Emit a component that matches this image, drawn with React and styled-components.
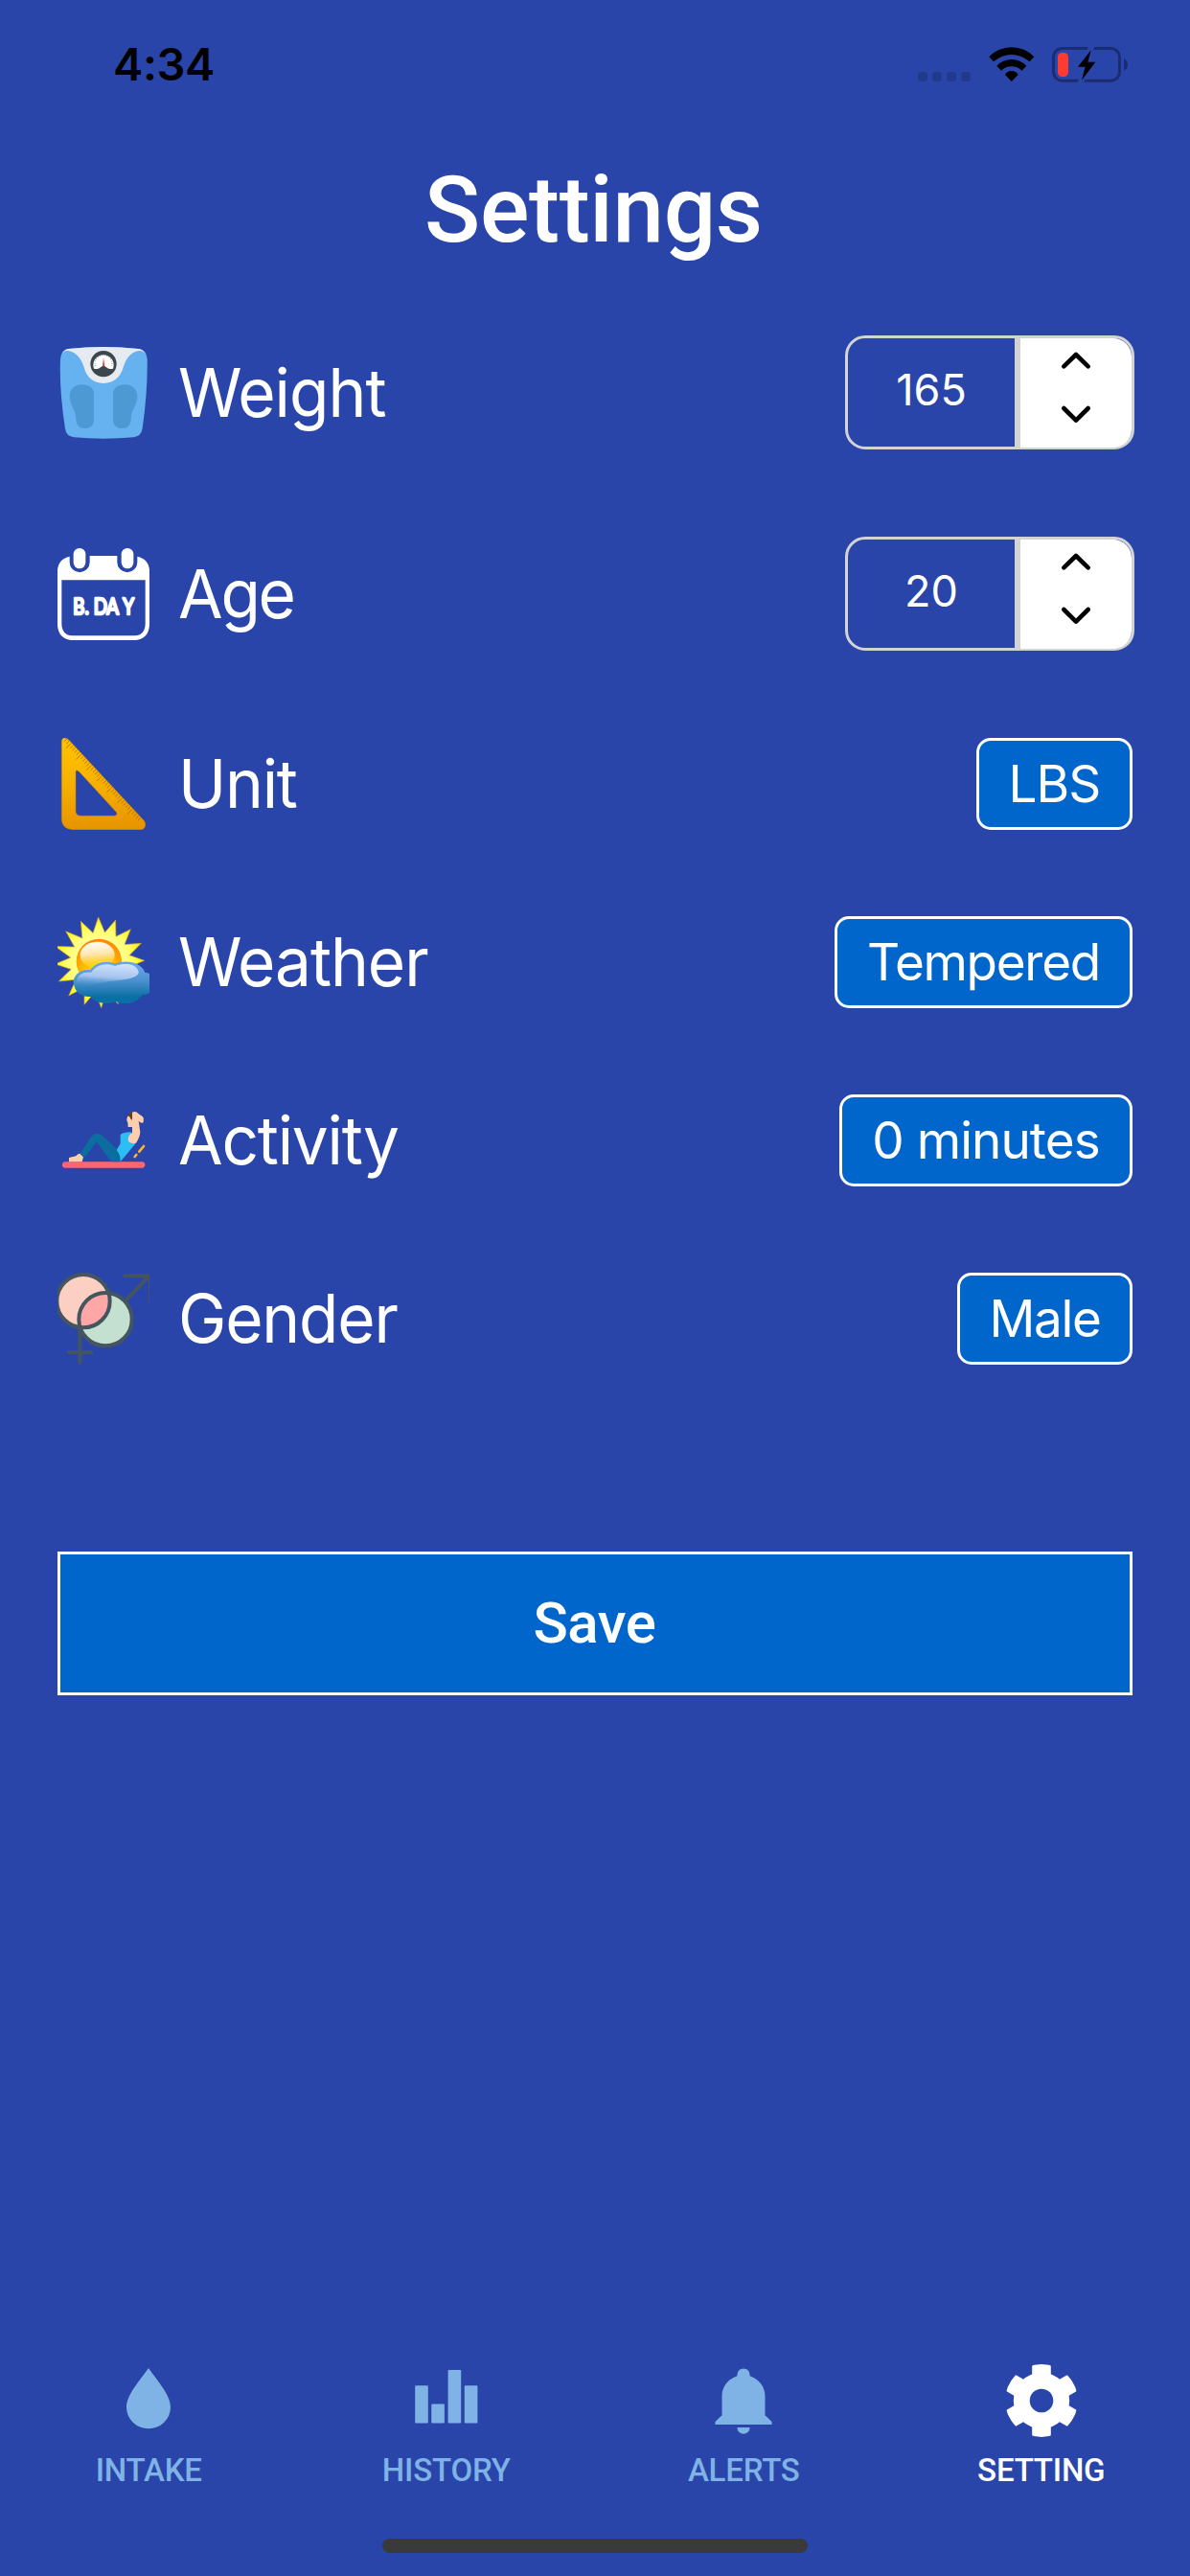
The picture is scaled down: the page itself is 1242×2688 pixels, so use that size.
import React from "react";
import styled, { createGlobalStyle } from "styled-components";

const BG = "#2945a9";
const TEXT_FONT = `Inter, "Liberation Sans", sans-serif`;
const HEAD_FONT = `Roboto, "Liberation Sans", sans-serif`;

const GlobalStyle = createGlobalStyle`
  *, *::before, *::after { box-sizing: border-box; }
  html, body { margin: 0; background: ${BG}; }
  button { font: inherit; color: inherit; margin: 0; cursor: pointer; }
  svg { display: block; flex: none; }
`;

const Screen = styled.div`
  display: flex;
  flex-direction: column;
  width: 1242px;
  height: 2688px;
  overflow: hidden;
  background: ${BG};
  color: #fff;
  font-family: ${TEXT_FONT};
`;

const StatusBar = styled.header`
  display: flex;
  align-items: center;
  justify-content: space-between;
  height: 87px;
  padding: 47px 65px 0 118px;
  color: #000;
`;

const Clock = styled.time`
  font-size: 47px;
  font-weight: 600;
  line-height: 40px;
  letter-spacing: -0.4px;
`;

const StatusIcons = styled.div`
  display: flex;
  gap: 18.5px;
`;

const Title = styled.h1`
  margin: 76px 0 75px;
  padding-right: 3px;
  font-family: ${HEAD_FONT};
  font-size: 96px;
  font-weight: 500;
  line-height: 112px;
  letter-spacing: -0.3px;
  text-align: center;
`;

const Settings = styled.main`
  display: flex;
  flex-direction: column;
  gap: 90px;
  padding: 0 60px;
`;

const Row = styled.section`
  display: flex;
  align-items: center;
  height: ${(p) => (p.$tall ? 120 : 96)}px;
`;

const Label = styled.h2`
  flex: 1;
  margin: 0 0 0 30px;
  font-size: 70px;
  font-weight: 400;
  line-height: 84px;
  letter-spacing: ${(p) => p.$spacing}px;
  transform: scaleX(0.965);
  transform-origin: left;
`;

const Stepper = styled.div`
  display: flex;
  width: 302px;
  height: 119px;
  margin: 0 -2px 1px 0;
  border: 3px solid #d3d3d3;
  border-radius: 21px;
`;

const StepperValue = styled.div`
  flex: 1;
  font-size: 45px;
  line-height: 108px;
  text-align: center;
`;

const StepperButtons = styled.div`
  display: flex;
  flex-direction: column;
  align-items: center;
  gap: 22px;
  width: 122px;
  height: 114px;
  padding: 12px 1px 0 0;
  border-left: 6px solid #d3d3d3;
  border-radius: 0 19px 19px 0;
  background: #fff;
`;

const StepButton = styled.button`
  display: block;
  padding: 0;
  border: 0;
  background: none;
`;

const Chip = styled.button`
  width: ${(p) => p.$width}px;
  height: 96px;
  padding: 0;
  border: 3px solid #fff;
  border-radius: 15px;
  background: #0066cc;
  font-size: 53px;
  line-height: 90px;
  letter-spacing: ${(p) => p.$spacing}px;
  white-space: nowrap;
`;

const SaveButton = styled.button`
  height: 150px;
  margin: 195px 60px 0;
  padding: 0 1px 2px 0;
  border: 3px solid #fff;
  background: #0066cc;
  font-family: ${HEAD_FONT};
  font-size: 60px;
  font-weight: 500;
  letter-spacing: -0.4px;
`;

const TabBar = styled.nav`
  display: grid;
  grid-template-columns: repeat(4, 1fr);
  margin-top: auto;
`;

const Tab = styled.a`
  display: flex;
  flex-direction: column;
  align-items: center;
  gap: 13px;
  color: ${(p) => (p.$active ? "#fff" : "#7fb2e5")};
  font-family: ${HEAD_FONT};
  font-size: 33px;
  font-weight: 500;
  line-height: 40px;
  letter-spacing: -0.2px;
`;

const HomeIndicator = styled.div`
  flex: none;
  align-self: center;
  width: 444px;
  height: 15px;
  margin: 51px 0 24px;
  border-radius: 8px;
  background: #3a3a3a;
`;

/* ---------- status icons ---------- */

const SignalDots = () => (
  <svg width="55" height="40" viewBox="0 0 55 40" fill="#223a8d">
    {[0, 15, 30, 45].map((x) => (
      <rect key={x} x={x} y="28" width="10" height="10" rx="3.2" />
    ))}
  </svg>
);

const Wifi = () => (
  <svg width="48" height="40" viewBox="0 0 48 40">
    <path d="M0.3 12.3A32.5 32.5 0 0 1 47.3 12.3L42.5 17.3A27.7 27.7 0 0 0 5 17.3Z" />
    <path d="M8.3 21.7A21.3 21.3 0 0 1 39.3 21.7L34.6 26.7A15.5 15.5 0 0 0 13 26.7Z" />
    <path d="M17 31A7.8 7.8 0 0 1 30.6 31L23.8 38Z" />
  </svg>
);

const Battery = () => (
  <svg width="79" height="40" viewBox="0 0 79 40">
    <rect x="1.5" y="3.5" width="69" height="33.7" rx="9" fill="none" stroke="#1b2d70" strokeWidth="3" />
    <path d="M75 14Q79 16.5 79 20.5T75 27Z" fill="#1b2d70" />
    <path d="M42 0L39 7M32 34L29.5 40" stroke={BG} strokeWidth="6" />
    <rect x="6" y="8" width="11" height="25" rx="4.5" fill="#ff3b30" />
    <path d="M40.7 5.2L27 22.8H34.6L31 36.8L45.3 17.8H37.4Z" />
  </svg>
);

/* ---------- row icons ---------- */

const IconFrame = ({ top, children }) => (
  <svg width="96" height="96" viewBox={`60 ${top} 288 288`}>
    {children}
  </svg>
);

const ScaleIcon = () => (
  <IconFrame top={66}>
    <path d="M94 72Q204 60 314 72Q340 76 341 104Q343 200 326 322Q322 346 298 349Q204 357 112 349Q87 346 84 322Q65 200 69 104Q70 76 94 72Z" fill="#66b1ef" />
    <path d="M74 88Q80 74 94 72Q204 60 314 72Q330 74 335 88Q327 76 314 78C284 84 273 108 266 130C258 160 236 180 204 180S150 160 143 130C136 108 124 84 94 78Q81 76 74 88Z" fill="#e6ebf1" />
    <circle cx="204" cy="119" r="41" fill="#3c474d" />
    <path d="M174 134A32 32 0 1 1 234 134Q220 138 213 130A12 12 0 0 0 195 130Q188 138 174 134Z" fill="#fff" />
    <path d="M178 126A27 27 0 1 1 230 126" fill="none" stroke="#7b858c" strokeWidth="4" strokeDasharray="2 5.5" />
    <path d="M201 126L204 99L208 126Z" fill="#ee3b45" />
    <path d="M98 222C98 198 114 184 138 184C160 184 174 196 174 214V293C174 310 164 321 146 321S119 310 118 293C117 258 98 250 98 222Z" fill="#4d99d3" />
    <path d="M310 222C310 198 294 184 271 184C248 184 234 196 234 214V293C234 310 244 321 262 321S289 310 290 293C291 258 310 250 310 222Z" fill="#4d99d3" />
  </IconFrame>
);

const BirthdayIcon = () => (
  <IconFrame top={696}>
    <path
      fill="#fff"
      fillRule="evenodd"
      d="M98 722V740A31 31 0 0 0 161 740V720H247V740A31 31 0 0 0 310 740V722Q346 730 348 766V936Q346 980 304 984H104Q62 980 60 936V766Q62 730 98 722ZM73 796V932Q74 968 106 970H302Q334 968 335 932V796Z"
    />
    <rect x="110" y="696" width="38" height="64" rx="19" fill="#fff" />
    <rect x="260" y="696" width="38" height="64" rx="19" fill="#fff" />
    <text
      x="136 182 217 267 331"
      y="903"
      transform="scale(0.8 1)"
      fill="#fff"
      stroke="#fff"
      strokeWidth="8"
      strokeLinejoin="round"
      fontFamily="Lato, sans-serif"
      fontWeight="400"
      fontSize="70"
    >
      B.DAY
    </text>
  </IconFrame>
);

const TICKS = Array.from({ length: 37 }, (_, i) => i);

const SetSquareIcon = () => (
  <IconFrame top={60}>
    <defs>
      <linearGradient id="square" x1="0" y1="0" x2="0" y2="1">
        <stop offset="0" stopColor="#ffc400" />
        <stop offset="0.5" stopColor="#f8b000" />
        <stop offset="1" stopColor="#e79300" />
      </linearGradient>
    </defs>
    <path
      fill="url(#square)"
      stroke="#c98200"
      strokeWidth="1.5"
      fillRule="evenodd"
      d="M73 72Q73 60 83 60Q90 60 98 69L330 318Q337 327 335 335Q332 347 320 347H108Q73 345 73 312ZM117 166V290Q118 303 132 304H238Q250 302 244 292L128 166Q118 158 117 166Z"
    />
    <g stroke="#a86a00" strokeWidth="2.5">
      {TICKS.map((i) => {
        const x = 90 + i * 6.4;
        const y = 61 + i * 6.87;
        const size = i % 5 === 2 ? 18 : 10;
        return <path key={i} d={`M${x} ${y + 2}l${-size * 0.9} ${size * 0.86}`} />;
      })}
    </g>
  </IconFrame>
);

const SUN = { x: 194, y: 762, inner: 94 };
const RAY_TIPS = [
  [188, 621], [242, 630], [289, 659], [322, 703], [332, 757], [336, 810], [322, 850],
  [290, 880], [250, 893], [197, 905], [144, 895], [95, 867], [64, 822], [52, 768],
  [52, 712], [86, 665], [133, 634],
];

const raysPath = () =>
  RAY_TIPS.map(([x, y], i) => {
    const [nx, ny] = RAY_TIPS[(i + 1) % RAY_TIPS.length];
    const dx = (x + nx) / 2 - SUN.x;
    const dy = (y + ny) / 2 - SUN.y;
    const k = SUN.inner / Math.hypot(dx, dy);
    return `${x},${y} ${SUN.x + dx * k},${SUN.y + dy * k}`;
  }).join(" ");

const WeatherIcon = () => (
  <IconFrame top={618}>
    <defs>
      <radialGradient id="rays" gradientUnits="userSpaceOnUse" cx="190" cy="760" r="145">
        <stop offset="0.45" stopColor="#ffff9c" />
        <stop offset="0.7" stopColor="#ffff6a" />
        <stop offset="1" stopColor="#ffee00" />
      </radialGradient>
      <radialGradient id="sun" cx="0.5" cy="0.75" r="0.7">
        <stop offset="0" stopColor="#ffe600" />
        <stop offset="0.6" stopColor="#ffb400" />
        <stop offset="1" stopColor="#ff8a00" />
      </radialGradient>
      <linearGradient id="gloss" x1="0" y1="0" x2="0.1" y2="1">
        <stop offset="0" stopColor="#fff" />
        <stop offset="0.5" stopColor="#ffe6b0" />
        <stop offset="1" stopColor="#ffdd22" stopOpacity="0.3" />
      </linearGradient>
      <linearGradient id="cloud" x1="0" y1="0" x2="0" y2="1">
        <stop offset="0" stopColor="#6fa9ee" />
        <stop offset="0.45" stopColor="#4a90cf" />
        <stop offset="0.85" stopColor="#0a6fa3" />
        <stop offset="1" stopColor="#0872a8" />
      </linearGradient>
      <linearGradient id="cloudGloss" x1="0.6" y1="0" x2="0.4" y2="1">
        <stop offset="0" stopColor="#cfe0ff" />
        <stop offset="0.6" stopColor="#a4c4ee" />
        <stop offset="1" stopColor="#5e9fd6" stopOpacity="0.1" />
      </linearGradient>
    </defs>
    <polygon points={raysPath()} fill="url(#rays)" stroke="#c9a227" strokeWidth="2" />
    <circle cx="190" cy="760" r="71" fill="url(#sun)" />
    <ellipse cx="185" cy="740" rx="54" ry="42" fill="url(#gloss)" />
    <path
      d="M111 826C111 800 135 785 163 788C178 765 210 757 240 768C280 754 325 766 333 796Q345 797 352 802V856Q340 866 325 864C310 892 270 897 243 885C215 897 180 890 163 870C130 872 111 850 111 826Z"
      fill="url(#cloud)"
    />
    <path
      d="M352 802Q345 797 333 796C325 766 280 754 240 768C210 757 178 765 163 788C135 785 111 800 111 826"
      fill="none"
      stroke="#5e9fe0"
      strokeWidth="3"
    />
    <path
      d="M118 828C118 804 138 792 165 794C182 770 212 763 240 774C274 762 308 768 314 792C316 812 270 818 222 822C180 828 140 846 118 828Z"
      fill="url(#cloudGloss)"
    />
  </IconFrame>
);

const ActivityIcon = () => (
  <IconFrame top={36}>
    <rect x="75" y="247" width="259" height="19" rx="9.5" fill="#ff6670" />
    <path d="M96 247V234L118 229Q122 221 130 221L141 232L137 247Z" fill="#ffcead" />
    <path d="M131 221L164 171Q182 147 202 167L249 210L264 228L257 247H229L182 184L148 230Q142 234 139 230Z" fill="#0b6e9e" />
    <path d="M257 163Q262 155 290 154L306 184Q304 192 297 199L257 247Q258 226 245 210L257 190Z" fill="#2dbdf4" />
    <path d="M281 178Q282 162 294 156L294 138L281 138L280 124Q274 116 280 104L294 92Q305 86 314 97L327 106Q332 112 328 125Q320 127 314 119L319 154Q318 170 306 188Q296 192 284 185Z" fill="#ffcead" />
    <path d="M280 103Q283 93 294 92V117Q287 112 286 106Z" fill="#66411b" />
    <path d="M316 215L330 198M302 231L307 225" fill="none" stroke="#ffb531" strokeWidth="8" strokeLinecap="round" />
  </IconFrame>
);

const GenderIcon = () => (
  <IconFrame top={594}>
    <defs>
      <clipPath id="overlap">
        <circle cx="141" cy="683" r="83" />
      </clipPath>
    </defs>
    <circle cx="141" cy="683" r="83" fill="#fbd0c3" />
    <circle cx="210" cy="740" r="83" fill="#c3e0d0" />
    <circle cx="210" cy="740" r="83" fill="#ffa6a6" clipPath="url(#overlap)" />
    <g fill="none" stroke="#455560" strokeWidth="12" strokeLinecap="round">
      <circle cx="141" cy="683" r="83" />
      <circle cx="210" cy="740" r="83" />
      <path d="M130 768V876M95 843H166M274 680L345 607M271 604H351V682" />
    </g>
  </IconFrame>
);

/* ---------- controls ---------- */

const Chevron = ({ down }) => (
  <svg width="34" height="30" viewBox="0 0 34 30" fill="none" stroke="#000" strokeWidth="4.6" strokeLinecap="round" strokeLinejoin="round">
    <path d={down ? "M4.3 9L17 21.7L29.7 9" : "M4.3 17.4L17 5L29.7 17.4"} />
  </svg>
);

const NumberStepper = ({ value }) => (
  <Stepper>
    <StepperValue>{value}</StepperValue>
    <StepperButtons>
      <StepButton aria-label="Increase">
        <Chevron />
      </StepButton>
      <StepButton aria-label="Decrease">
        <Chevron down />
      </StepButton>
    </StepperButtons>
  </Stepper>
);

/* ---------- tab icons ---------- */

const TabIcon = ({ children }) => (
  <svg width="80" height="80" viewBox="0 0 80 80" fill="currentColor">
    {children}
  </svg>
);

const DropIcon = () => (
  <TabIcon>
    <path d="M40 6C31 19 17 34 17 47A23 22.3 0 0 0 63 47C63 34 49 19 40 6Z" />
  </TabIcon>
);

const BarsIcon = () => (
  <TabIcon>
    <rect x="7.2" y="24.2" width="13.6" height="39.3" rx="0.8" />
    <rect x="24.3" y="43.6" width="13.6" height="19.9" rx="0.8" />
    <rect x="41.6" y="7.9" width="13.6" height="55.6" rx="0.8" />
    <rect x="58.8" y="24.2" width="13.6" height="39.3" rx="0.8" />
  </TabIcon>
);

const BellIcon = () => (
  <TabIcon>
    <path d="M33.4 14.2V13A6.6 6.6 0 0 1 46.6 13V14.2C56 17.5 62.5 25 62.5 35.5V55.2L69.5 62V65H10.5V62L17.5 55.2V35.5C17.5 25 24 17.5 33.4 14.2Z" />
    <path d="M33.4 68H46.6A6.6 6.7 0 0 1 33.4 68Z" />
  </TabIcon>
);

const GearIcon = () => (
  <TabIcon>
    <defs>
      <clipPath id="gearRim">
        <circle cx="40" cy="40" r="38" />
      </clipPath>
      <mask id="gearHole">
        <rect width="80" height="80" fill="#fff" />
        <circle cx="40" cy="40" r="12.3" fill="#000" />
      </mask>
    </defs>
    <g mask="url(#gearHole)">
      <circle cx="40" cy="40" r="29.2" />
      <g clipPath="url(#gearRim)">
        {[0, 60, 120].map((angle) => (
          <rect key={angle} x="30.2" y="2" width="19.6" height="76" rx="2" transform={`rotate(${angle} 40 40)`} />
        ))}
      </g>
    </g>
  </TabIcon>
);

/* ---------- data ---------- */

const ROWS = [
  { label: "Weight", spacing: -1, icon: ScaleIcon, number: 165 },
  { label: "Age", spacing: -2.3, icon: BirthdayIcon, number: 20 },
  { label: "Unit", spacing: -1.3, icon: SetSquareIcon, chip: "LBS", width: 163, chipSpacing: -0.9 },
  { label: "Weather", spacing: -1.1, icon: WeatherIcon, chip: "Tempered", width: 311, chipSpacing: -1.3 },
  { label: "Activity", spacing: -1.25, icon: ActivityIcon, chip: "0 minutes", width: 306, chipSpacing: -0.95 },
  { label: "Gender", spacing: -1.25, icon: GenderIcon, chip: "Male", width: 183, chipSpacing: -1.3 },
];

const TABS = [
  { label: "INTAKE", icon: DropIcon },
  { label: "HISTORY", icon: BarsIcon },
  { label: "ALERTS", icon: BellIcon },
  { label: "SETTING", icon: GearIcon, active: true },
];

export default function App() {
  return (
    <Screen>
      <GlobalStyle />
      <StatusBar>
        <Clock>4:34</Clock>
        <StatusIcons>
          <SignalDots />
          <Wifi />
          <Battery />
        </StatusIcons>
      </StatusBar>
      <Title>Settings</Title>
      <Settings>
        {ROWS.map(({ label, icon: Icon, number, chip, width, spacing, chipSpacing }) => (
          <Row key={label} $tall={number !== undefined}>
            <Icon />
            <Label $spacing={spacing}>{label}</Label>
            {chip ? (
              <Chip $width={width} $spacing={chipSpacing}>{chip}</Chip>
            ) : (
              <NumberStepper value={number} />
            )}
          </Row>
        ))}
      </Settings>
      <SaveButton>Save</SaveButton>
      <TabBar>
        {TABS.map(({ label, icon: Icon, active }) => (
          <Tab key={label} $active={active}>
            <Icon />
            {label}
          </Tab>
        ))}
      </TabBar>
      <HomeIndicator />
    </Screen>
  );
}
